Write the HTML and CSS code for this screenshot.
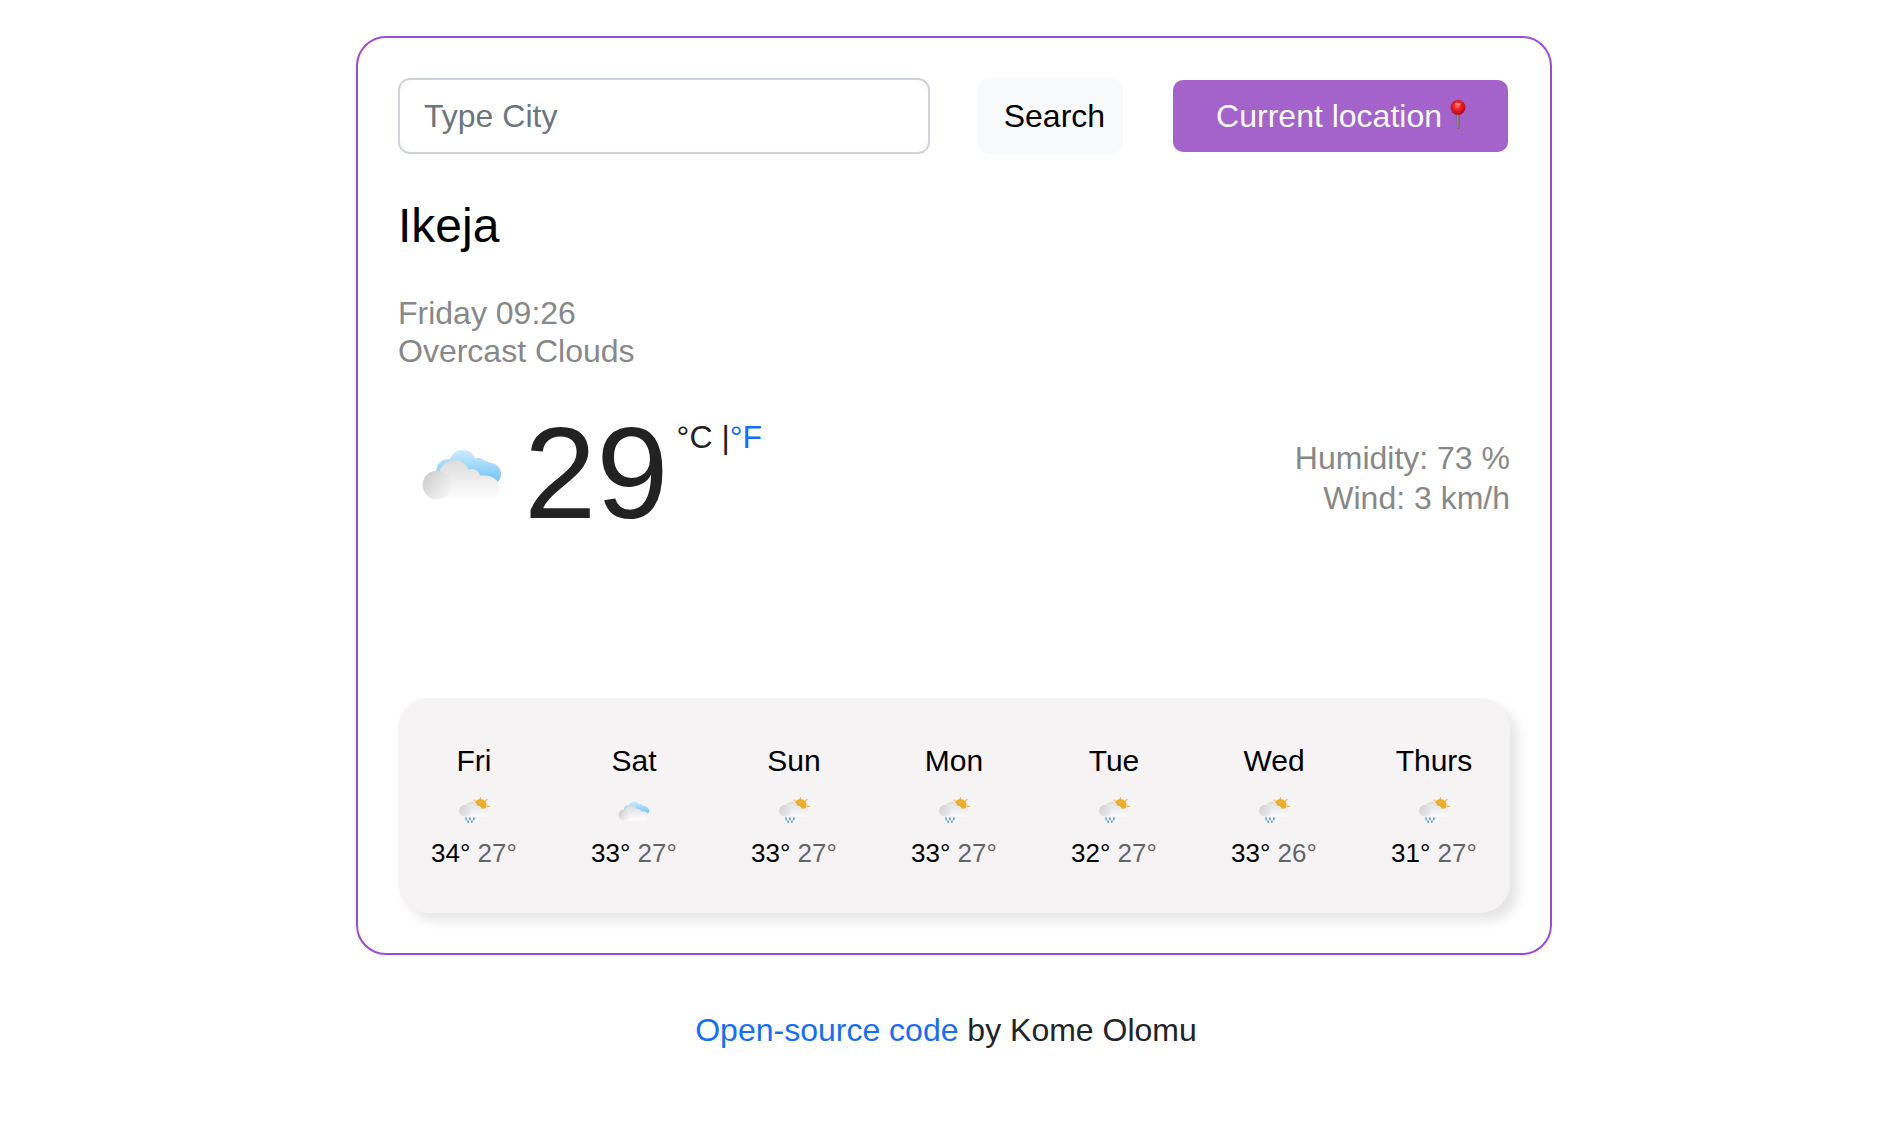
FILE: index.html
```html
<!DOCTYPE html>
<html lang="en">
<head>
  <meta charset="utf-8">
  <meta name="viewport" content="width=device-width, initial-scale=1">
  <title>Weather</title>
  <link rel="stylesheet" href="styles.css">
</head>
<body>
  <svg class="sprite" aria-hidden="true">
    <defs>
      <linearGradient id="blue" x1="0" y1="149" x2="0" y2="245" gradientUnits="userSpaceOnUse">
        <stop offset="0" stop-color="#cdebff"/><stop offset="1" stop-color="#72c4f5"/>
      </linearGradient>
      <linearGradient id="grey" x1="0" y1="180" x2="0" y2="298" gradientUnits="userSpaceOnUse">
        <stop offset="0" stop-color="#dcdcdc"/><stop offset="1" stop-color="#ffffff"/>
      </linearGradient>
      <linearGradient id="puff" x1="135" y1="228" x2="205" y2="280" gradientUnits="userSpaceOnUse">
        <stop offset="0" stop-color="#cfcfcf"/><stop offset="1" stop-color="#f4f4f4"/>
      </linearGradient>
      <linearGradient id="rain-grey" x1="0" y1="6" x2="0" y2="22" gradientUnits="userSpaceOnUse">
        <stop offset="0" stop-color="#dedede"/><stop offset="1" stop-color="#fbfbfb"/>
      </linearGradient>
      <linearGradient id="rain-puff" x1="1" y1="13" x2="13" y2="18" gradientUnits="userSpaceOnUse">
        <stop offset="0" stop-color="#d0d0d0"/><stop offset="1" stop-color="#ececec"/>
      </linearGradient>
      <radialGradient id="pin-head" cx="0.45" cy="0.4" r="0.6">
        <stop offset="0" stop-color="#ff6a5e"/><stop offset="0.45" stop-color="#ee1c25"/><stop offset="1" stop-color="#a80d1c"/>
      </radialGradient>
    </defs>
    <symbol id="clouds" viewBox="123 100 246 246">
      <g fill="url(#blue)">
        <circle cx="248" cy="189" r="40"/><circle cx="205" cy="212" r="36"/>
        <circle cx="296" cy="189" r="17"/><circle cx="330" cy="221" r="33"/>
        <path d="M205 180H310L335 189V245H205Z"/>
      </g>
      <path fill="url(#grey)" d="M171 298A43 43 0 0 1 177 218C184 194 202 180 224 180C243 180 259 190 266 208C282 203 296 209 300 226C334 222 358 237 358 262C358 284 344 298 323 298Z"/>
      <circle cx="171" cy="254" r="43" fill="url(#puff)"/>
    </symbol>
    <symbol id="sun-rain" viewBox="0 0 32 32">
      <path stroke="#f0b54a" stroke-width="1.2" stroke-linecap="round" d="M22.3 2.5V4M29 4.5L27.5 6M31.3 11.3H29M16 5L17.2 6.2"/>
      <circle cx="22.5" cy="10" r="6" fill="#ecae27"/>
      <path fill="url(#rain-grey)" d="M7 22A6 6 0 0 1 7.8 10.2C9 7.5 11.5 6.5 14 6.5C16.5 6.5 18.7 8 19.6 10.8C21.5 10.6 23.2 11.8 23.6 13.8C28 13 31 15 31 18C31 20.5 29 22 26.5 22Z"/>
      <circle cx="7.2" cy="15.8" r="6" fill="url(#rain-puff)"/>
      <path stroke="#559fd3" stroke-width="1.6" stroke-linecap="round" d="M8 23L8.3 24.4M12 23V24.4M16 23L15.7 24.4M10 26L10.2 27.2M14 26L13.8 27.2"/>
    </symbol>
  </svg>

  <main class="card">
    <form class="search" onsubmit="return false">
      <input class="search-input" type="text" placeholder="Type City" aria-label="City">
      <button class="search-button" type="submit">Search</button>
      <button class="location-button" type="button">Current location<svg class="pin" viewBox="0 0 32 32" aria-hidden="true"><path fill="#6f6470" d="M14.3 14H18L17.5 28.6Q16 29.8 14.9 28.6Z"/><path fill="#a89a98" d="M15.2 14H16.4V28H15.5Z"/><circle cx="16" cy="7.5" r="7.5" fill="url(#pin-head)"/><ellipse cx="16" cy="4" rx="3" ry="1.3" fill="#ff9d94" opacity="0.7"/></svg></button>
    </form>

    <h1 class="city">Ikeja</h1>
    <ul class="summary">
      <li>Friday 09:26</li>
      <li>Overcast Clouds</li>
    </ul>

    <section class="current">
      <svg class="current-icon" viewBox="123 140 246 168" role="img" aria-label="Overcast clouds"><use href="#clouds" x="123" y="100" width="246" height="246"/></svg>
      <strong class="temperature">29</strong>
      <span class="units">°C |<a href="#">°F</a></span>
      <ul class="details">
        <li>Humidity: 73 %</li>
        <li>Wind: 3 km/h</li>
      </ul>
    </section>

    <section class="forecast">
      <div class="day"><span class="day-name">Fri</span><svg class="day-icon"><use href="#sun-rain"/></svg><span class="range">34° <span class="low">27°</span></span></div>
      <div class="day"><span class="day-name">Sat</span><svg class="day-icon"><use href="#clouds"/></svg><span class="range">33° <span class="low">27°</span></span></div>
      <div class="day"><span class="day-name">Sun</span><svg class="day-icon"><use href="#sun-rain"/></svg><span class="range">33° <span class="low">27°</span></span></div>
      <div class="day"><span class="day-name">Mon</span><svg class="day-icon"><use href="#sun-rain"/></svg><span class="range">33° <span class="low">27°</span></span></div>
      <div class="day"><span class="day-name">Tue</span><svg class="day-icon"><use href="#sun-rain"/></svg><span class="range">32° <span class="low">27°</span></span></div>
      <div class="day"><span class="day-name">Wed</span><svg class="day-icon"><use href="#sun-rain"/></svg><span class="range">33° <span class="low">26°</span></span></div>
      <div class="day"><span class="day-name">Thurs</span><svg class="day-icon"><use href="#sun-rain"/></svg><span class="range">31° <span class="low">27°</span></span></div>
    </section>
  </main>

  <footer class="credit"><a href="#">Open-source code</a> by Kome Olomu</footer>
</body>
</html>
```

FILE: styles.css
```css
* {
  box-sizing: border-box;
}

body {
  margin: 0;
  padding: 36px 0 0 10px;
  background: #fff;
  color: #212529;
  font-family: "Liberation Sans", Arial, sans-serif;
  font-size: 32px;
  line-height: 40px;
}

a {
  color: #156dff;
  text-decoration: none;
}

ul {
  margin: 0;
  padding: 0;
  list-style: none;
}

.sprite {
  position: absolute;
  width: 0;
  height: 0;
}

.card {
  max-width: 1196px;
  margin: 0 auto;
  padding: 40px;
  border: 2px solid #9b4bdb;
  border-radius: 30px;
}

.search {
  display: flex;
  align-items: center;
  gap: 48px;
}

.search-input,
.search-button,
.location-button {
  font: inherit;
  border-radius: 12px;
}

.search-input {
  flex: 1;
  min-width: 0;
  padding: 16px 24px;
  border: 2px solid #ced4da;
  color: #212529;
}

.search-input::placeholder {
  color: #6c757d;
  opacity: 1;
}

.search-button {
  padding: 18px 18px 18px 26px;
  border: 0;
  background: #f8f9fb;
  color: #000;
}

.location-button {
  display: flex;
  align-items: center;
  margin: 0 2px;
  padding: 16px 34px 16px 43px;
  border: 0;
  border-radius: 10px;
  background: #a463cb;
  color: #f8f9fa;
}

.pin {
  width: 32px;
  height: 32px;
}

.city {
  margin: 43px 0 39px;
  color: #000;
  font-size: 48px;
  font-weight: 400;
  line-height: 58px;
}

.summary {
  color: #888;
  line-height: 38px;
}

.current {
  display: flex;
  align-items: center;
  margin-top: 41px;
}

.current-icon {
  width: 82px;
  height: 56px;
  margin: 0 21px 0 23px;
}

.temperature {
  padding-bottom: 4px;
  color: #222;
  font-size: 130px;
  font-weight: 400;
  line-height: 124px;
}

.units {
  align-self: flex-start;
  margin: 6px 0 0 8px;
  color: #222;
}

.details {
  margin: 6px 0 0 auto;
  color: #888;
  text-align: right;
}

.forecast {
  display: flex;
  gap: 48px;
  margin-top: 159px;
  padding: 45px 20px 44px;
  border-radius: 30px;
  background: #f5f3f4;
  box-shadow: 8px 8px 12px rgba(0, 0, 0, 0.1);
}

.day {
  display: flex;
  flex: 1;
  flex-direction: column;
  align-items: center;
  color: #000;
  white-space: nowrap;
}

.day-name {
  font-size: 30px;
  line-height: 36px;
}

.day-icon {
  width: 32px;
  height: 32px;
  margin: 16px 0 10px;
}

.range {
  font-size: 26px;
  line-height: 32px;
}

.low {
  color: #666;
}

.credit {
  margin-top: 55px;
  padding: 0 16px 40px 0;
  text-align: center;
}
```
